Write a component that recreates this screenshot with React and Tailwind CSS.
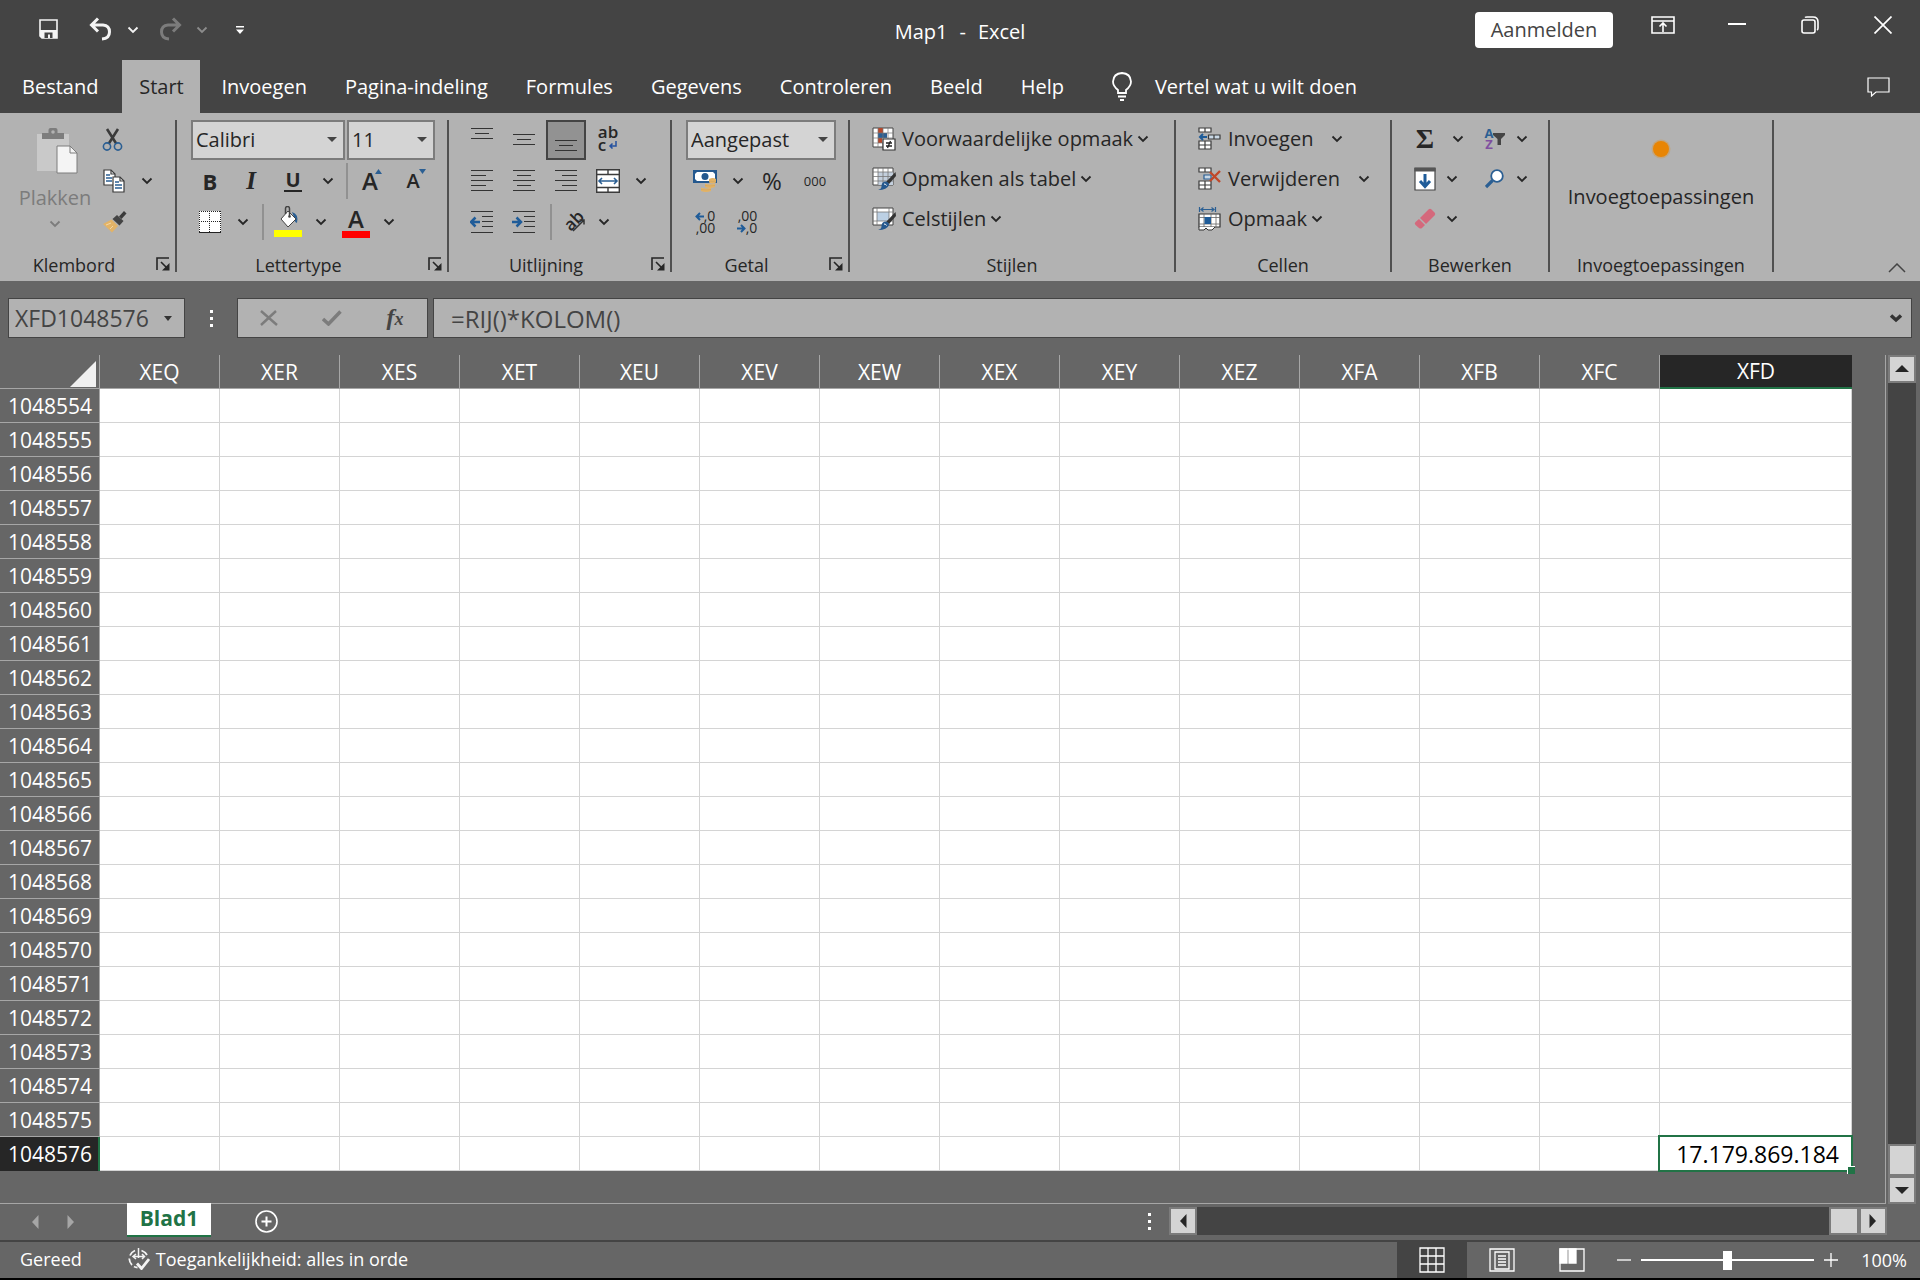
import React from 'react';

const columns = ['XEQ', 'XER', 'XES', 'XET', 'XEU', 'XEV', 'XEW', 'XEX', 'XEY', 'XEZ', 'XFA', 'XFB', 'XFC', 'XFD'];
const rows = Array.from({ length: 23 }, (_, i) => 1048554 + i);
const tabs = ['Invoegen', 'Pagina-indeling', 'Formules', 'Gegevens', 'Controleren', 'Beeld', 'Help'];

/* ---------- small shared pieces ---------- */

function Chevron({ className = 'text-[#262626]' }) {
  return (
    <svg width="12" height="8" viewBox="0 0 12 8" fill="none" className={`shrink-0 ${className}`}>
      <path d="M1.5 1.5 6 6l4.500-4.500" stroke="currentColor" strokeWidth="1.800" />
    </svg>
  );
}

function Triangle({ dir = 'down', className = 'text-[#262626]' }) {
  const d = {
    down: 'M0 4h14L7 11z',
    up: 'M0 10h14L7 3z',
    left: 'M10.500 0v14L4 7z',
    right: 'M3.500 0v14L10 7z',
  }[dir];
  return (
    <svg width="14" height="14" viewBox="0 0 14 14" className={`shrink-0 ${className}`}>
      <path d={d} fill="currentColor" />
    </svg>
  );
}

function Btn({ label, className = 'w-[42px]', children }) {
  return (
    <button type="button" aria-label={label} className={`h-10 shrink-0 flex items-center justify-center ${className}`}>
      {children}
    </button>
  );
}

function TextBtn({ icon, text, gap = 'gap-1' }) {
  return (
    <button type="button" className="h-10 flex items-center whitespace-nowrap">
      <span className="w-[30px] shrink-0">{icon}</span>
      <span className={`flex items-center ${gap}`}>
        {text}
        <Chevron />
      </span>
    </button>
  );
}

function Combo({ label, value, className }) {
  return (
    <div className={`relative h-10 shrink-0 ${className}`}>
      <select
        aria-label={label}
        defaultValue={value}
        className="appearance-none w-full h-full pl-[3px] pr-6 bg-[#d4d4d4] border-2 border-[#7c7c7c] text-[20px] text-[#262626]"
      >
        <option>{value}</option>
      </select>
      <span className="absolute right-2 top-3 pointer-events-none">
        <svg width="10" height="14" viewBox="0 0 10 14"><path d="M0 5h10L5 10z" fill="#444" /></svg>
      </span>
    </div>
  );
}

function Group({ title, launcher, className, children }) {
  return (
    <section aria-label={title} className={`shrink-0 h-[152px] border-r-2 border-[#505050] flex flex-col ${className}`}>
      <div className="h-[122px]">{children}</div>
      <div className="flex-1 flex items-end">
        <h2 className="flex-1 text-center text-[18px] leading-[14px]">{title}</h2>
        {launcher && (
          <button type="button" aria-label={`${title} instellingen`} className="ml-2 mr-1">
            <svg width="15" height="15" viewBox="0 0 15 15" fill="none" stroke="#262626" strokeWidth="1.600">
              <path d="M1 13V1h12M5 5l7 7" />
              <path d="M13.500 6v7.500H6z" fill="#262626" stroke="none" />
            </svg>
          </button>
        )}
      </div>
    </section>
  );
}

function VRule({ className = '' }) {
  return <span className={`w-0.5 h-9 shrink-0 bg-[#919191] ${className}`} />;
}

/* ---------- ribbon icons ---------- */

function Lines({ rows: list }) {
  return (
    <svg width="22" height="24" viewBox="0 0 22 24" fill="#333" shapeRendering="crispEdges">
      {list.map(([x1, x2, y]) => <rect key={y} x={x1} y={y} width={x2 - x1} height="1" />)}
    </svg>
  );
}

function Indent({ right }) {
  return (
    <svg width="24" height="24" viewBox="0 0 24 24" fill="none">
      <path d="M1 1.500h22M12 6.500h11M12 11.500h11M12 16.500h11M1 22.500h22" stroke="#333" strokeWidth="1.100" />
      {right
        ? <path d="M0 12h8M4.500 7.500 9 12l-4.500 4.500" stroke="#1f5c99" strokeWidth="2.500" />
        : <path d="M10 12H2M5.500 7.500 1 12l4.500 4.500" stroke="#1f5c99" strokeWidth="2.500" />}
    </svg>
  );
}

function PasteIcon() {
  return (
    <svg width="42" height="48" viewBox="0 0 42 48">
      <path d="M1 6h32v37H1z" fill="#c9c9c9" />
      <path d="M6 5h6.500V2q0-2 2-2h5q2 0 2 2v3H28v6H6z" fill="#7d7d7d" />
      <circle cx="17" cy="4" r="1.800" fill="#b2b2b2" />
      <path d="M21 18h13l7 7v20H21z" fill="#f4f4f4" stroke="#7d7d7d" />
      <path d="M34 18v7h7" fill="none" stroke="#7d7d7d" />
    </svg>
  );
}

function CutIcon() {
  return (
    <svg width="22" height="24" viewBox="0 0 22 24" fill="none">
      <path d="M5 1 14.500 16M16 1 6.500 16" stroke="#3b3b3b" strokeWidth="2.600" />
      <circle cx="5" cy="18.500" r="3.600" stroke="#2b5f93" strokeWidth="1.600" />
      <circle cx="16" cy="18.500" r="3.600" stroke="#2b5f93" strokeWidth="1.600" />
    </svg>
  );
}

function CopyIcon() {
  return (
    <svg width="22" height="24" viewBox="0 0 22 24" fill="#fff" stroke="#3b3b3b" strokeWidth="1.200">
      <path d="M1 1h7l4 4v11H1z" />
      <path d="M8 1v4h4" fill="none" />
      <path d="M3 6h4M3 9h6M3 12h6" stroke="#2b5f93" strokeWidth="1.400" />
      <path d="M10 8h7l4 4v11H10z" />
      <path d="M17 8v4h4" fill="none" />
      <path d="M12 13h4M12 16h7M12 19h7" stroke="#2b5f93" strokeWidth="1.400" />
    </svg>
  );
}

function BrushIcon() {
  return (
    <svg width="24" height="22" viewBox="0 0 24 22">
      <path d="m21 0 2.500 2.500-5 5.500L16 5.500z" fill="#3b3b3b" />
      <path d="m14 4 6.500 6-4 4.500-7-6.500z" fill="#444" />
      <path d="M8.500 8.500 15 15l-6 6.500L0 13z" fill="#e3b366" />
      <path d="m3 14 5-2M7 18l3-3" stroke="#f2d6a6" />
    </svg>
  );
}

function BordersIcon() {
  return (
    <svg width="22" height="22" viewBox="0 0 22 22">
      <path d="M0 0h22v22H0z" fill="#fff" />
      <path d="M0 .5h22M0 10.500h22M.5 0v21M10.500 0v21M21.500 0v21" stroke="#222" strokeDasharray="1 1" shapeRendering="crispEdges" />
      <path d="M0 21.500h22" stroke="#222" />
    </svg>
  );
}

function FillIcon() {
  return (
    <svg width="28" height="32" viewBox="0 0 28 32">
      <path d="M18 6q7 2 5 11-3-1-3-6z" fill="#2b5f93" />
      <path d="m14 5 8 8-8 8-7-8z" fill="#fff" stroke="#444" />
      <path d="M11.500 8V2.500q0-2 2-2t2 2V10" fill="none" stroke="#444" strokeWidth="1.500" />
      <circle cx="15.500" cy="10.500" r="1.300" fill="#444" />
      <path d="M0 24h28v7H0z" fill="#ff0" />
    </svg>
  );
}

function MergeIcon() {
  return (
    <svg width="24" height="24" viewBox="0 0 24 24">
      <path d="M.7.7h22.600v22.600H.7z" fill="#fff" stroke="#3b3b3b" strokeWidth="1.400" />
      <path d="M12 1v4M1 5.500h22M1 18.500h22M12 19v4" stroke="#3b3b3b" strokeWidth="1.400" />
      <path d="M3 12h18M6 9l-3 3 3 3M18 9l3 3-3 3" stroke="#2b5f93" strokeWidth="1.600" fill="none" />
    </svg>
  );
}

function MoneyIcon() {
  return (
    <svg width="24" height="24" viewBox="0 0 24 24">
      <path d="M0 1h24v13H0z" fill="#24588e" />
      <path d="M4 3h16l2 2v5l-2 2H4l-2-2V5z" fill="#fff" />
      <circle cx="12" cy="7.500" r="3.500" fill="#24588e" />
      <path d="M16 10q4-2 7 0v3.500q-4 2-7 0zM12 14.500q5 2 10 0V18q-5 2-10 0zM8 18.500q5 2 10 0V22q-5 2-10 0z" fill="#e3b366" />
      <path d="M16 12q4 1 7 0M12 16.500q5 1 10 0M8 20.500q5 1 10 0" stroke="#d2a55e" strokeWidth=".7" fill="none" />
    </svg>
  );
}

function SmallArrow({ right }) {
  return (
    <svg width="9" height="9" viewBox="0 0 9 9" fill="none" stroke="#1f5c99" strokeWidth="2">
      {right ? <path d="M0 4.500h7.500M4 1l3.500 3.500L4 8" /> : <path d="M9 4.500H1.500M5 1 1.500 4.500 5 8" />}
    </svg>
  );
}

function CondIcon() {
  return (
    <svg width="24" height="24" viewBox="0 0 24 24">
      <path d="M1 1h20v19H1z" fill="#fff" stroke="#444" />
      <path d="M6 1h5v5H6zM6 11h4v5H6z" fill="#b5472b" />
      <path d="M6 6h9v5H6z" fill="#2b5f93" />
      <path d="M1 6h20M1 11h20M1 16h20M6 1v19M11 1v19M16 1v19" stroke="#777" strokeWidth=".7" />
      <path d="M11 12h12v11H11z" fill="#fff" stroke="#333" strokeWidth="1.200" />
      <path d="M14 16h6M14 19h6M18.500 14l-3 7" stroke="#222" strokeWidth="1.300" />
    </svg>
  );
}

function StyleIcon({ cell }) {
  return (
    <svg width="24" height="24" viewBox="0 0 24 24">
      <path d="M1 1h20v17H1z" fill="#fff" stroke="#444" />
      {cell ? (
        <>
          <path d="M5 5h12v9H5z" fill="#bcd0e4" />
          <path d="M1 5h20M1 14h20M5 1v17M17 1v17" stroke="#777" strokeWidth=".8" />
        </>
      ) : (
        <>
          <path d="M6 5h15v13H6z" fill="#c3cfdd" />
          <path d="M1 5h20M1 9.500h20M1 14h20M6 1v17M11 1v17M16 1v17" stroke="#777" strokeWidth=".8" />
        </>
      )}
      <path d="m23.500 5 .5 4-7 8-3-2z" fill="#333" />
      <path d="M13 14.500q4 0 4 3.500-2 5-11 5 4-1 3.500-4.500Q10 15 13 14.500z" fill="#24588e" />
      <path d="M12 17q2 0 2.500 1.500" stroke="#fff" fill="none" />
    </svg>
  );
}

function CellsIcon({ kind }) {
  if (kind === 'format') {
    return (
      <svg width="24" height="24" viewBox="0 0 24 24">
        <path d="M1.500 0v5M17.500 0v5M3 2.500h13M5.500.5l-2.500 2 2.500 2M13.500.5l2.500 2-2.500 2" stroke="#2b5f93" strokeWidth="1.200" fill="none" />
        <path d="M1 7h21v13H1z" fill="#fff" stroke="#333" strokeWidth="1.200" />
        <path d="M1 10.500h21M1 17h21M6 7v13M13 7v13M18 7v13" stroke="#666" strokeWidth=".8" />
        <path d="M6.500 10h6.500v7H6.500z" fill="#1f5c99" />
        <path d="M1 20v3h5l2-2 2 2h4l3-3" fill="#fff" stroke="#333" />
      </svg>
    );
  }
  return (
    <svg width="24" height="24" viewBox="0 0 24 24" fill="#fff" stroke="#3b3b3b" strokeWidth="1.200">
      <path d="M1 1h12v4H1zM7 1v4" />
      <path d="M1 14h12v8H1zM1 18h12M7 14v8" />
      {kind === 'insert' ? (
        <>
          <path d="M10.500 8H22v4H10.500zM16 8v4" fill="#c9d8e6" />
          <path d="M9 10H2M5 7l-3 3 3 3" stroke="#1f5c99" strokeWidth="2" fill="none" />
        </>
      ) : (
        <>
          <path d="M6 8h7v4H6z" fill="#c9d8e6" stroke="#2b5f93" />
          <path d="m12 5 10 10M22 4 12 14" stroke="#c0482a" strokeWidth="2.400" fill="none" />
        </>
      )}
    </svg>
  );
}

/* ---------- window parts ---------- */

function TitleBar() {
  return (
    <header className="h-[60px] grid grid-cols-[1fr_auto_1fr] items-center text-white">
      <div className="flex items-center pl-[37px]">
        <button type="button" aria-label="Opslaan" className="mr-7">
          <svg width="24" height="24" viewBox="0 0 24 24" className="-mt-0.5">
            <path d="M3 3h17v18H5l-2-2z" fill="none" stroke="#f4f4f4" strokeWidth="1.600" />
            <path d="M3 13h17v8H5l-2-2z" fill="#f4f4f4" />
            <path d="M7.500 15.500h8V21h-2.500v-3.500h-2V21H7.500z" fill="#444" />
          </svg>
        </button>
        <button type="button" aria-label="Ongedaan maken" className="mb-0.5">
          <svg width="24" height="24" viewBox="0 0 24 24" fill="none" stroke="#f4f4f4" strokeWidth="3">
            <path d="M9 1.500 2.500 8 9 14.500M3 8h11q6.500.5 6.500 7T13 22" />
          </svg>
        </button>
        <button type="button" aria-label="Meer ongedaan maken" className="ml-3.5"><Chevron className="text-[#f4f4f4]" /></button>
        <button type="button" aria-label="Opnieuw" className="ml-[19px] mb-0.5">
          <svg width="24" height="24" viewBox="0 0 24 24" fill="none" stroke="#7c7c7c" strokeWidth="3">
            <path d="m15 1.500 6.500 6.500-6.500 6.500M21 8H10q-6.500.5-6.500 7t7.500 7" />
          </svg>
        </button>
        <button type="button" aria-label="Meer opnieuw" className="ml-3.5"><Chevron className="text-[#8c8c8c]" /></button>
        <button type="button" aria-label="Werkbalk Snelle toegang aanpassen" className="ml-[27px]">
          <svg width="10" height="10" viewBox="0 0 10 10" fill="#fff"><path d="M1 1h8v1.500H1zM1 4.500h8L5 9z" /></svg>
        </button>
      </div>
      <h1 className="flex gap-3 pt-1"><span>Map1</span><span>-</span><span>Excel</span></h1>
      <div className="flex items-start justify-end h-9">
        <button type="button" className="h-9 w-[138px] rounded-sm bg-white text-[#444]">Aanmelden</button>
        <button type="button" aria-label="Weergaveopties voor lint" className="ml-[38px] mt-1">
          <svg width="24" height="18" viewBox="0 0 24 18" fill="none" stroke="#fff" strokeWidth="1.600">
            <path d="M1 1h22v16H1zM1 5h22M12 16V7M8.500 10.500 12 7l3.500 3.500" />
          </svg>
        </button>
        <button type="button" aria-label="Minimaliseren" className="ml-[53px] mt-[11px]">
          <svg width="18" height="2" viewBox="0 0 18 2"><path d="M0 0h18v2H0z" fill="#fff" /></svg>
        </button>
        <button type="button" aria-label="Verkleinen" className="ml-[55px] mt-1">
          <svg width="18" height="18" viewBox="0 0 18 18" fill="none" stroke="#fff" strokeWidth="1.600">
            <rect x="1" y="4" width="13" height="13" rx="2" />
            <path d="M4 1.500Q4.500 1 6 1h6q5 0 5 5v6q0 1.500-1 2" />
          </svg>
        </button>
        <button type="button" aria-label="Sluiten" className="ml-[55px] mr-7 mt-1">
          <svg width="18" height="18" viewBox="0 0 18 18" stroke="#fff" strokeWidth="1.700"><path d="m.5.5 17 17M17.500.5l-17 17" /></svg>
        </button>
      </div>
    </header>
  );
}

function TabBar() {
  return (
    <nav className="h-[53px] flex items-stretch text-white">
      <button type="button" className="pl-[22px] pr-6">Bestand</button>
      <button type="button" className="w-[78px] bg-[#b2b2b2] text-[#262626]">Start</button>
      <div className="flex pl-0.5">
        {tabs.map((t) => (
          <button key={t} type="button" className="px-[19px] pt-px">{t}</button>
        ))}
      </div>
      <button type="button" className="ml-7 flex items-center gap-[22px]">
        <svg width="22" height="30" viewBox="0 0 22 30" fill="none" stroke="#fff" strokeWidth="1.800">
          <path d="M7 21v-3q-5-4-5-8.500Q2.500 1.500 11 1q8.500.5 9 8.500Q20 14 15 18v3zM7 24.500h8M9 28h4" />
        </svg>
        Vertel wat u wilt doen
      </button>
      <button type="button" aria-label="Opmerkingen" className="ml-auto mr-[29px]">
        <svg width="24" height="20" viewBox="0 0 24 20" fill="none" stroke="#fff" strokeWidth="1.200">
          <path d="M1 1h21v14H9l-4.500 4v-4H1z" />
        </svg>
      </button>
    </nav>
  );
}

function Ribbon() {
  return (
    <div className="h-[168px] pt-[7px] flex bg-[#b2b2b2] text-[#262626]">
      <Group title="Klembord" launcher className="w-[177px]">
        <div className="flex">
          <button type="button" className="w-[92px] pl-[18px] pt-2 flex flex-col items-center text-[#7c7c7c]">
            <span className="ml-1"><PasteIcon /></span>
            <span className="leading-7 pt-2">Plakken</span>
            <Chevron className="mt-2 text-[#7c7c7c]" />
          </button>
          <div className="flex flex-col">
            <Btn label="Knippen" className="w-[42px]"><CutIcon /></Btn>
            <div className="flex h-[42px] items-center">
              <Btn label="Kopiëren" className="w-11"><CopyIcon /></Btn>
              <Btn label="Kopieeropties" className="w-[22px]"><Chevron /></Btn>
            </div>
            <Btn label="Opmaak kopiëren" className="w-[46px]"><BrushIcon /></Btn>
          </div>
        </div>
      </Group>

      <Group title="Lettertype" launcher className="w-[272px]">
        <div className="flex gap-0.5 pl-3.5">
          <Combo label="Lettertype" value="Calibri" className="w-[154px]" />
          <Combo label="Tekengrootte" value="11" className="w-[88px]" />
        </div>
        <div className="h-[42px] flex items-center pl-3">
          <Btn label="Vet"><span className="font-bold text-[22px]">B</span></Btn>
          <Btn label="Cursief" className="w-10"><span className="font-['Liberation_Serif'] italic font-bold text-[25px]">I</span></Btn>
          <Btn label="Onderstrepen" className="w-11"><span className="font-bold text-[20px] leading-5 border-b-2 border-[#262626] px-px">U</span></Btn>
          <Btn label="Onderstrepingsopties" className="w-[26px]"><Chevron /></Btn>
          <VRule className="ml-[5px]" />
          <Btn label="Groter" className="w-11 relative">
            <span className="text-[24px] font-semibold">A</span>
            <svg width="7" height="5" viewBox="0 0 7 5" className="absolute top-2 right-2.5"><path d="M0 5h7L3.500 0z" fill="#2b5f93" /></svg>
          </Btn>
          <Btn label="Kleiner" className="relative w-[42px]">
            <span className="text-[20px] font-semibold">A</span>
            <svg width="7" height="5" viewBox="0 0 7 5" className="absolute top-2 right-2"><path d="M0 0h7L3.500 5z" fill="#2b5f93" /></svg>
          </Btn>
        </div>
        <div className="flex items-center pl-3">
          <Btn label="Randen"><BordersIcon /></Btn>
          <Btn label="Randopties" className="w-6"><Chevron /></Btn>
          <VRule className="ml-[7px]" />
          <Btn label="Opvulkleur" className="w-12"><FillIcon /></Btn>
          <Btn label="Opvulopties" className="w-[18px]"><Chevron /></Btn>
          <Btn label="Tekstkleur" className="w-[52px]">
            <span className="w-7 border-b-[7px] border-[#f00] text-center text-[24px] leading-6 font-semibold">A</span>
          </Btn>
          <Btn label="Tekstkleuropties" className="w-3.5"><Chevron /></Btn>
        </div>
      </Group>

      <Group title="Uitlijning" launcher className="w-[223px]">
        <div className="flex pl-3">
          <Btn label="Boven uitlijnen"><Lines rows={[[0, 22, 0], [4, 18, 5], [0, 22, 10]]} /></Btn>
          <Btn label="Centreren in het midden"><Lines rows={[[0, 22, 6], [4, 18, 11], [0, 22, 16]]} /></Btn>
          <Btn label="Onder uitlijnen" className="w-10 mx-px bg-[#929292] border-2 border-[#444]">
            <Lines rows={[[0, 22, 12], [4, 18, 17], [0, 22, 22]]} />
          </Btn>
          <Btn label="Terugloop">
            <span className="text-left text-[17px] leading-[13px] font-semibold pb-1">
              ab<br />
              <span className="flex items-center gap-0.5">
                c
                <svg width="9" height="8" viewBox="0 0 9 8" fill="none" stroke="#2451a0" strokeWidth="1.500"><path d="M8 0v5H2M4.500 2.500 2 5l2.500 2.500" /></svg>
              </span>
            </span>
          </Btn>
        </div>
        <div className="h-[42px] flex items-center pl-3">
          <Btn label="Links uitlijnen"><Lines rows={[[0, 22, 1], [0, 15, 6], [0, 22, 11], [0, 15, 16], [0, 22, 21]]} /></Btn>
          <Btn label="Centreren"><Lines rows={[[0, 22, 1], [4, 18, 6], [0, 22, 11], [4, 18, 16], [0, 22, 21]]} /></Btn>
          <Btn label="Rechts uitlijnen"><Lines rows={[[0, 22, 1], [7, 22, 6], [0, 22, 11], [7, 22, 16], [0, 22, 21]]} /></Btn>
          <Btn label="Samenvoegen en centreren"><MergeIcon /></Btn>
          <Btn label="Samenvoegopties" className="w-6"><Chevron /></Btn>
        </div>
        <div className="flex items-center pl-3">
          <Btn label="Inspringing verkleinen"><Indent /></Btn>
          <Btn label="Inspringing vergroten"><Indent right /></Btn>
          <VRule className="ml-[5px]" />
          <Btn label="Afdrukstand" className="w-[46px] relative">
            <span className="-rotate-45 text-[17px] leading-4 font-semibold pb-1">ab</span>
            <svg width="14" height="14" viewBox="0 0 14 14" fill="none" stroke="#333" strokeWidth="1.500" className="absolute left-5 top-4">
              <path d="M1 13 12 2M7.500 2H12v4.500" />
            </svg>
          </Btn>
          <Btn label="Afdrukstandopties" className="w-3"><Chevron /></Btn>
        </div>
      </Group>

      <Group title="Getal" launcher className="w-[178px]">
        <div className="flex pl-3.5"><Combo label="Getalnotatie" value="Aangepast" className="w-[150px]" /></div>
        <div className="h-[42px] flex items-center pl-3">
          <Btn label="Financiële notatie"><MoneyIcon /></Btn>
          <Btn label="Valuta-opties" className="w-6"><Chevron /></Btn>
          <Btn label="Procentnotatie" className="w-11"><span className="text-[24px]">%</span></Btn>
          <Btn label="Duizendtalnotatie"><span className="text-[13px]">000</span></Btn>
        </div>
        <div className="flex pl-3">
          <Btn label="Meer decimalen">
            <span className="text-[14px] leading-3 text-right"><span className="flex items-center"><SmallArrow />,0</span>,00</span>
          </Btn>
          <Btn label="Minder decimalen">
            <span className="text-[14px] leading-3 text-right">,00<span className="flex items-center"><SmallArrow right />,0</span></span>
          </Btn>
        </div>
      </Group>

      <Group title="Stijlen" className="w-[326px]">
        <div className="-mt-px pl-[22px]">
          <TextBtn icon={<CondIcon />} text="Voorwaardelijke opmaak" />
          <TextBtn icon={<StyleIcon />} text="Opmaken als tabel" />
          <TextBtn icon={<StyleIcon cell />} text="Celstijlen" />
        </div>
      </Group>

      <Group title="Cellen" className="w-[216px]">
        <div className="-mt-px pl-[22px]">
          <TextBtn icon={<CellsIcon kind="insert" />} text="Invoegen" gap="gap-[18px]" />
          <TextBtn icon={<CellsIcon kind="delete" />} text="Verwijderen" gap="gap-[18px]" />
          <TextBtn icon={<CellsIcon kind="format" />} text="Opmaak" />
        </div>
      </Group>

      <Group title="Bewerken" className="w-[158px]">
        <div className="-mt-px">
          <div className="flex pl-3">
            <Btn label="AutoSom"><span className="font-['Liberation_Serif'] font-bold text-[28px] leading-7">Σ</span></Btn>
            <Btn label="AutoSomopties" className="w-6"><Chevron /></Btn>
            <Btn label="Sorteren en filteren" className="w-[34px] ml-2">
              <span className="text-[13px] leading-[11px] font-bold flex flex-col">
                <span className="text-[#2b5f93]">A</span>
                <span className="text-[#8050a0]">Z</span>
              </span>
              <svg width="12" height="14" viewBox="0 0 12 14"><path d="M0 1h12v2L8 7v6H4.500V7L0 3z" fill="#444" /></svg>
            </Btn>
            <Btn label="Sorteeropties" className="w-5"><Chevron /></Btn>
          </div>
          <div className="flex pl-3">
            <Btn label="Doorvoeren">
              <svg width="22" height="24" viewBox="0 0 22 24">
                <path d="M1 1h20v22H1z" fill="#fff" stroke="#444" strokeWidth="1.200" />
                <path d="M.4 1h21.200v3.500H.4z" fill="#555" />
                <path d="M11 7v12M6 14l5 5.500 5-5.500" fill="none" stroke="#1f5c99" strokeWidth="3" />
              </svg>
            </Btn>
            <Btn label="Doorvoeropties" className="w-3"><Chevron /></Btn>
            <Btn label="Zoeken en selecteren" className="w-[34px] ml-5">
              <svg width="20" height="20" viewBox="0 0 20 20">
                <path d="m1 18 6.500-6.500" stroke="#2b5f93" strokeWidth="3.200" />
                <circle cx="12" cy="7" r="5.800" fill="#fff" stroke="#2b5f93" strokeWidth="1.800" />
              </svg>
            </Btn>
            <Btn label="Zoekopties" className="w-5"><Chevron /></Btn>
          </div>
          <div className="flex pl-3">
            <Btn label="Wissen">
              <svg width="22" height="22" viewBox="0 0 22 22" fill="#d4697c">
                <path d="M14.500 1.500q1.500-1.500 3 0L20.500 4.500q1.500 1.500 0 3L12 16 6 10z" />
                <path d="m5 11 6 6-3 3q-1.500 1-3 0l-3.500-3q-1.500-1.500 0-3z" />
              </svg>
            </Btn>
            <Btn label="Wisopties" className="w-3"><Chevron /></Btn>
          </div>
        </div>
      </Group>

      <Group title="Invoegtoepassingen" className="w-[224px]">
        <button type="button" className="w-full pt-[19px] flex flex-col items-center gap-6">
          <svg width="20" height="20" viewBox="0 0 20 20">
            <circle cx="10" cy="10" r="9.500" fill="#e88a0c" opacity=".3" />
            <circle cx="10" cy="10" r="8" fill="#e88504" />
          </svg>
          <span>Invoegtoepassingen</span>
        </button>
      </Group>

      <button type="button" aria-label="Lint samenvouwen" className="ml-auto mr-3.5 mt-auto mb-2">
        <svg width="18" height="10" viewBox="0 0 18 10" fill="none" stroke="#444" strokeWidth="1.500"><path d="m1 9 8-8 8 8" /></svg>
      </button>
    </div>
  );
}

function FormulaBar() {
  return (
    <div className="h-[74px] pt-[17px] px-2 flex items-start text-[#444]">
      <div className="w-[177px] h-10 flex items-center bg-[#b2b2b2] border border-[#444] pr-3">
        <input aria-label="Naamvak" defaultValue="XFD1048576" className="min-w-0 flex-1 h-full pl-1.5 text-[23px] bg-transparent outline-none" />
        <svg width="8" height="5" viewBox="0 0 8 5"><path d="M0 0h8L4 5z" fill="#333" /></svg>
      </div>
      <div className="w-[52px] h-10 flex flex-col items-center justify-center gap-1">
        <i className="size-[3px] bg-white" />
        <i className="size-[3px] bg-white" />
        <i className="size-[3px] bg-white" />
      </div>
      <div className="w-[191px] h-10 flex items-center bg-[#b2b2b2] border border-[#444]">
        <Btn label="Annuleren" className="w-[62px]">
          <svg width="18" height="16" viewBox="0 0 18 16" stroke="#7c7c7c" strokeWidth="2.400"><path d="m1 1 16 14M16 1 1 15" /></svg>
        </Btn>
        <Btn label="Invoeren" className="w-16">
          <svg width="20" height="16" viewBox="0 0 20 16" fill="none" stroke="#7c7c7c" strokeWidth="3.500"><path d="m1 9 5.500 5L18.500 1.500" /></svg>
        </Btn>
        <Btn label="Functie invoegen" className="w-[62px]">
          <span className="font-['Liberation_Serif'] italic font-bold text-[24px] leading-6">f<span className="text-[18px]">x</span></span>
        </Btn>
      </div>
      <div className="ml-[5px] flex-1 h-10 flex items-center bg-[#b2b2b2] border border-[#444] pr-2">
        <input aria-label="Formulebalk" defaultValue="=RIJ()*KOLOM()" className="min-w-0 flex-1 h-full pl-[17px] text-[24px] bg-transparent outline-none" />
        <svg width="14" height="9" viewBox="0 0 14 9" fill="none" stroke="#333" strokeWidth="3.500"><path d="m2 1.500 5 4.500 5-4.500" /></svg>
      </div>
    </div>
  );
}

function Sheet() {
  return (
    <table className="table-fixed w-[1852px] border-separate border-spacing-0 text-white">
      <colgroup>
        <col className="w-[100px]" />
        {columns.map((c) => <col key={c} className={c === 'XFD' ? 'w-[192px]' : 'w-[120px]'} />)}
      </colgroup>
      <thead>
        <tr className="h-[34px]">
          <th className="p-0 border-r border-b border-[#a6a6a6]">
            <svg width="26" height="26" viewBox="0 0 26 26" className="ml-auto mr-[3px] mt-1"><path d="M26 0v26H0z" fill="#f0f0f0" /></svg>
          </th>
          {columns.map((c) => (
            <th
              key={c}
              scope="col"
              className={c === 'XFD'
                ? 'p-0 bg-[#262626] border-b-2 border-[#217346] text-[21px] leading-8 font-normal'
                : 'p-0 border-r border-b border-[#a6a6a6] text-[21px] leading-8 font-normal'}
            >
              {c}
            </th>
          ))}
        </tr>
      </thead>
      <tbody>
        {rows.map((r) => {
          const active = r === 1048576;
          return (
            <tr key={r} className="h-[34px]">
              <th
                scope="row"
                className={active
                  ? 'p-0 pr-[6px] bg-[#262626] border-r-2 border-[#217346] text-right text-[21px] leading-8 font-normal'
                  : 'p-0 pr-[7px] border-r border-b border-[#a6a6a6] text-right text-[21px] leading-8 font-normal'}
              >
                {r}
              </th>
              {columns.map((c) => {
                if (active && c === 'XFD') {
                  return (
                    <td key={c} className="relative p-0 pr-3 bg-white border-r border-b border-[#d4d4d4] text-black text-right text-[23px] leading-8">
                      17.179.869.184
                      <span className="absolute -left-0.5 -top-0.5 -right-0.5 -bottom-0.5 border-2 border-[#217346]" />
                      <span className="absolute -right-1 -bottom-1 size-2 bg-[#217346] border-t border-l border-white" />
                    </td>
                  );
                }
                return <td key={c} className="p-0 bg-white border-r border-b border-[#d4d4d4]" />;
              })}
            </tr>
          );
        })}
      </tbody>
    </table>
  );
}

function ScrollBtn({ dir, label }) {
  return (
    <button type="button" aria-label={label} className="size-7 shrink-0 flex items-center justify-center bg-[#d4d4d4] border-2 border-[#7c7c7c]">
      <Triangle dir={dir} />
    </button>
  );
}

function SheetTabs() {
  return (
    <div className="h-[38px] flex items-start border-b-2 border-[#444]">
      <button type="button" aria-label="Vorig blad" className="ml-7 mt-[11px]"><Triangle dir="left" className="text-[#a6a6a6]" /></button>
      <button type="button" aria-label="Volgend blad" className="ml-[22px] mt-[11px]"><Triangle dir="right" className="text-[#a6a6a6]" /></button>
      <button type="button" className="ml-[49px] w-[84px] h-[34px] -mt-px bg-white border-b-2 border-[#217346] font-bold text-[21px] leading-[30px] pb-0.5 text-[#217346]">Blad1</button>
      <button type="button" aria-label="Nieuw blad" className="ml-11 mt-1.5">
        <svg width="23" height="23" viewBox="0 0 23 23" fill="none" stroke="#fff">
          <circle cx="11.500" cy="11.500" r="10.500" strokeWidth="1.600" />
          <path d="M11.500 6.500v10M6.500 11.500h10" strokeWidth="2" />
        </svg>
      </button>
      <div className="ml-auto flex h-7 mt-[3px] mr-[33px] w-[739px]">
        <div className="w-[21px] flex flex-col justify-center gap-1">
          <i className="size-[3px] bg-white" />
          <i className="size-[3px] bg-white" />
          <i className="size-[3px] bg-white" />
        </div>
        <ScrollBtn dir="left" label="Naar links" />
        <div className="flex-1 bg-[#444] flex justify-end">
          <div className="w-[30px] bg-[#d4d4d4] border-2 border-[#7c7c7c]" />
        </div>
        <ScrollBtn dir="right" label="Naar rechts" />
      </div>
    </div>
  );
}

function StatusBar() {
  return (
    <footer className="h-9 flex items-stretch text-white text-[18px] leading-[34px]">
      <span className="ml-5">Gereed</span>
      <button type="button" className="ml-[46px] pb-0.5 flex items-center gap-1.5">
        <svg width="22" height="22" viewBox="0 0 22 22" fill="none" stroke="#f4f4f4" strokeWidth="1.800">
          <path d="M7 2.500Q3.500 4 2 7.500M1.200 10.500Q1.500 14.500 4 17M6 18.500q1.500 1 3.500 1M13.500 2.500q4 1.500 5.500 4.500" />
          <path d="M10.500 0v10M5 8.500h11M8 6 5 8.500l3 2.500M14 6l2.500 2.500L14 11" strokeWidth="1.500" />
          <path d="m9 15.500 4.500 5L21 11" strokeWidth="2.800" />
        </svg>
        Toegankelijkheid: alles in orde
      </button>
      <div className="ml-auto flex items-center">
        <button type="button" aria-label="Normaal" className="w-[70px] h-9 flex items-center justify-center bg-[#444]">
          <svg width="26" height="26" viewBox="0 0 26 26" fill="none" stroke="#fff" strokeWidth="1.300"><path d="M1 1h24v24H1zM9 1v24M17 1v24M1 9h24M1 17h24" /></svg>
        </button>
        <button type="button" aria-label="Pagina-indeling" className="w-[70px] h-9 flex items-center justify-center">
          <svg width="26" height="24" viewBox="0 0 26 24" fill="none" stroke="#fff" strokeWidth="1.300"><path d="M1 1h24v22H1zM6 4h14v17H6zM9 8h8M9 11h8M9 14h8M9 17h8" /></svg>
        </button>
        <button type="button" aria-label="Pagina-eindevoorbeeld" className="w-[70px] h-9 flex items-center justify-center">
          <svg width="26" height="24" viewBox="0 0 26 24" fill="none" stroke="#fff" strokeWidth="1.300">
            <path d="M1 1h24v22H1z" />
            <path d="M1 1h7v14H1zM10 1h7v14h-7z" fill="#fff" />
          </svg>
        </button>
        <button type="button" aria-label="Uitzoomen" className="ml-2.5"><svg width="14" height="14" viewBox="0 0 14 14"><path d="M0 7h14" stroke="#fff" strokeWidth="1.300" /></svg></button>
        <input
          type="range"
          aria-label="Zoomen"
          min="0"
          max="100"
          defaultValue="50"
          className="appearance-none w-[173px] h-5 ml-2.5 bg-transparent bg-[linear-gradient(#fff,#fff)] bg-[length:100%_2px] bg-center bg-no-repeat [&::-webkit-slider-thumb]:appearance-none [&::-webkit-slider-thumb]:w-[9px] [&::-webkit-slider-thumb]:h-[19px] [&::-webkit-slider-thumb]:bg-white"
        />
        <button type="button" aria-label="Inzoomen" className="ml-2.5"><svg width="14" height="14" viewBox="0 0 14 14"><path d="M0 7h14M7 0v14" stroke="#fff" strokeWidth="1.300" /></svg></button>
        <span className="ml-[23px] mr-[13px]">100%</span>
      </div>
    </footer>
  );
}

export default function App() {
  return (
    <div className="min-h-screen flex flex-col bg-[#444] font-['Open_Sans',sans-serif] text-[20px] leading-7 overflow-x-hidden">
      <TitleBar />
      <TabBar />
      <Ribbon />
      <main className="flex-1 flex flex-col bg-[#666] border-b-2 border-black">
        <FormulaBar />
        <div className="flex">
          <div className="flex-1 min-w-0 pb-8 border-b border-r border-[#a6a6a6]">
            <Sheet />
          </div>
          {/* vertical scrollbar */}
          <div className="w-7 ml-0.5 mr-1 flex flex-col">
            <ScrollBtn dir="up" label="Omhoog" />
            <div className="flex-1 flex items-end bg-[#444]">
              <div className="w-7 h-8 bg-[#d4d4d4] border-2 border-[#7c7c7c]" />
            </div>
            <ScrollBtn dir="down" label="Omlaag" />
          </div>
        </div>
        <SheetTabs />
        <StatusBar />
      </main>
    </div>
  );
}
